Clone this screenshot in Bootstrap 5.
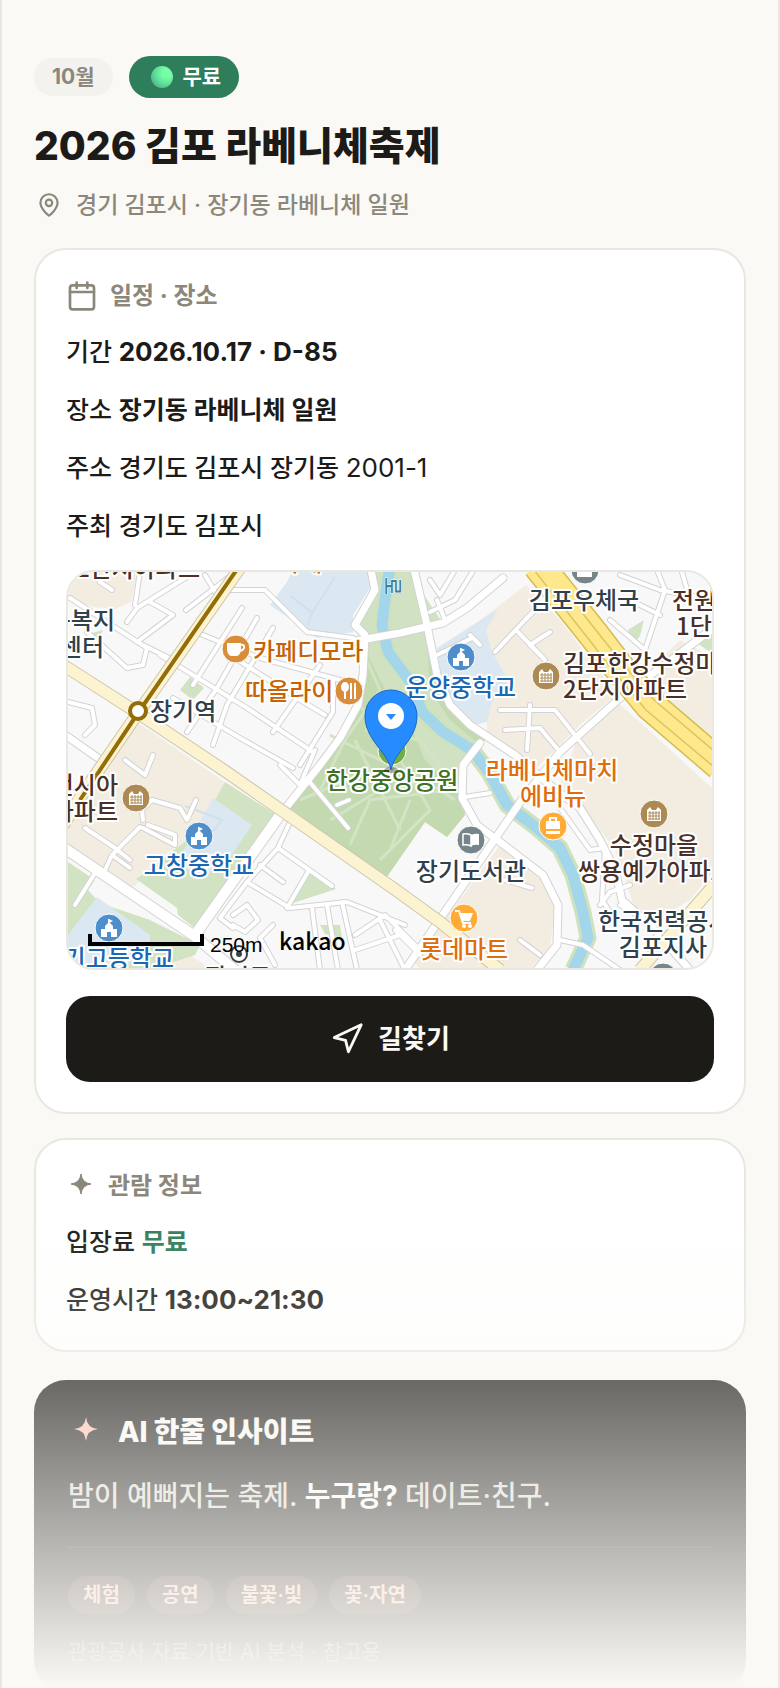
<!DOCTYPE html>
<html lang="ko">
<head>
<meta charset="utf-8">
<meta name="viewport" content="width=device-width, initial-scale=1">
<title>2026 김포 라베니체축제</title>
<link href="https://cdn.jsdelivr.net/npm/bootstrap@5.3.0/dist/css/bootstrap.min.css" rel="stylesheet">
<style>
:root{--ink:#1c1b17;--muted:#8c877b;--paper:#faf9f5;--rule:#e9e7e0;--green:#2e7d5b}
body{font-family:Inter,"Noto Sans CJK KR",sans-serif;color:var(--ink);background:var(--paper)}
.screen{background:var(--paper);border:solid var(--rule);border-width:0 2px;padding:56px 32px 0}
.fade-out{height:28vh;background:linear-gradient(rgba(250,249,245,0),#faf9f5);pointer-events:none}
.chip-month{background:#f3f2ee;color:var(--muted);font-size:21px;line-height:38px;padding:0 18px;font-weight:700}
.chip-free{background:var(--green);color:#fff;font-size:21px;line-height:42px;padding:0 18px 0 22px;font-weight:700;gap:10px}
.orb{width:22px;height:22px;border-radius:50%;background:radial-gradient(circle at 72% 32%,#76ffa6 0 18%,#5fe29a 50%,#52b792 78%,#5795a0)}
.page-title{font-size:39px;line-height:52px;font-weight:800;margin:22px 0 18px}
.place-line{font-size:23px;line-height:30px;color:var(--muted);font-weight:500;gap:12px;margin-bottom:28px}
.panel{background:#fff;border:2px solid var(--rule);border-radius:32px;padding:30px}
.panel-head{font-size:24px;line-height:32px;font-weight:700;color:var(--muted);gap:12px;margin:0 0 20px}
.facts{font-size:25px;line-height:40px;font-weight:500;gap:18px}
.facts strong{font-weight:700}
.facts .figures{font-size:26px}
.plain{font-weight:400}
.free{color:var(--green)}
.map-box{border:2px solid var(--rule);border-radius:28px;margin:24px 0 26px;aspect-ratio:648/400}
.map-box svg{width:100%;height:100%}
.route-btn{background:var(--ink);color:var(--paper);font-size:26px;line-height:34px;font-weight:700;padding:26px;border:0;border-radius:24px;gap:14px}
.route-btn:hover{background:#33312a;color:#fff}
.insight{background:var(--ink);color:#faf9f5;border-radius:32px;padding:34px 34px 24px;margin-top:28px}
.insight h2{font-size:28px;line-height:36px;font-weight:800;gap:14px;margin:0 0 24px}
.insight p{font-size:28px;line-height:44px;font-weight:500;color:#dedbd2;margin:0}
.insight p strong{color:#fff;font-weight:700}
.insight-tags{border-top:2px solid rgba(255,255,255,.08);margin-top:28px;padding-top:28px;gap:12px}
.tag{background:#42302a;color:#ffc9ba;font-size:20px;line-height:38px;padding:0 15px;font-weight:600}
.source{font-size:21px;line-height:32px;color:#8c877b;margin-top:22px}
.line-icon{fill:none;stroke:currentColor;stroke-width:2;stroke-linecap:round;stroke-linejoin:round}
.labels text{font:500 24px "Noto Sans CJK KR",sans-serif;stroke:#fff;stroke-width:4px;paint-order:stroke;stroke-linejoin:round}
.labels .river-name{font-size:20px;stroke-width:1px}
</style>
</head>
<body>
<main class="screen position-relative vh-100 overflow-hidden">
  <header>
    <div class="d-flex align-items-center gap-3">
      <span class="chip-month rounded-pill">10월</span>
      <span class="chip-free rounded-pill d-flex align-items-center"><span class="orb"></span>무료</span>
    </div>
    <h1 class="page-title">2026 김포 라베니체축제</h1>
    <div class="place-line d-flex align-items-center">
      <svg class="line-icon" width="30" height="30" viewBox="-2 -2 28 28"><path d="M20 10c0 6-8 12-8 12s-8-6-8-12a8 8 0 0 1 16 0Z"/><circle cx="12" cy="10" r="3"/></svg>
      <span>경기 김포시 · 장기동 라베니체 일원</span>
    </div>
  </header>

  <section class="panel">
    <h2 class="panel-head d-flex align-items-center">
      <svg class="line-icon" width="32" height="32" viewBox="0 0 24 24"><rect x="3" y="4" width="18" height="18" rx="2"/><path d="M8 2v4M16 2v4M3 9h18"/></svg>
      일정 · 장소
    </h2>
    <div class="facts d-flex flex-column">
      <div>기간 <strong class="figures">2026.10.17 · D-85</strong></div>
      <div>장소 <strong>장기동 라베니체 일원</strong></div>
      <div>주소 경기도 김포시 장기동 <span class="figures plain">2001-1</span></div>
      <div>주최 경기도 김포시</div>
    </div>
    <div class="map-box overflow-hidden">
      <svg class="d-block" viewBox="68 572 644 396" preserveAspectRatio="xMidYMid slice" role="img" aria-label="장기동 라베니체 지도">
        <defs>
          <g id="glyph-school" fill="#fff"><path d="M-8 9V1h4v-3l4-4 4 4v3h4v8h-6V4h-4v5z"/><path d="M-1-9h1l4 2-4 2v2h-1z"/></g>
          <g id="glyph-apt"><path d="M-7 7V-4l3-3 2 3h4l2-3 3 3V7z" fill="#fff"/><path d="M-4-3V6M-1-3V6M2-3V6M5-3V6M-6-1H6M-6 2H6M-6 5H6" stroke="#b08c55" stroke-width="1"/></g>
          <g id="alleys">
            <path d="M225 590L265 590 307 632 353 638M198 633L260 658 347 682M160 655L193 675 247 708 313 752M257 618L217 688 187 732M242 608L193 685M273 628L227 705 213 745M320 665L273 732M173 698L240 738 293 768M127 622L137 608 190 575M137 642L177 662M150 602L173 615 137 642M87 632L127 668 143 665 147 648 70 598M333 680L333 712 300 765M205 575L220 600M186 610L245 565M230 655L300 700 325 715M100 582L112 590M135 605L140 572"/>
            <path d="M278 848L332 886M278 848L247 882 220 918 233 928M247 882L290 908 347 902 405 925M312 908L320 970M327 905L338 970M342 902L357 970M260 865L283 882M308 872L287 908M273 925L260 938 275 965M233 915L247 905 258 920 245 932 233 925M355 935L385 915 420 950M355 950L400 935M380 920L405 970M280 765L300 785 315 750M290 822L278 848"/>
            <path d="M308 780L348 828M337 805L349 800M85 828L115 848 130 860M143 820L142 810 152 800 180 808 187 820 196 800M143 828L175 845 175 835 148 825M140 827L112 855 105 870M112 855L130 868M125 760L145 775 153 755M97 870L75 905M68 702L92 708 95 725 85 735"/>
            <path d="M560 752L540 728 505 730M590 754L555 710 500 710M550 632L530 645 545 660M495 652L525 620 533 612M518 632L545 660M470 635L480 645M530 705L527 750M437 655L472 638M437 600L445 620M430 580L440 595 455 570M480 560L455 600 430 612M465 797L490 793M560 808L590 850 604 848M605 850L602 900 610 912M560 940L583 945 620 970M600 905L610 892 630 885M520 940L540 955M505 880L532 888"/>
            <path d="M620 575L660 590 714 600M655 565L665 590 645 650 610 620M630 600L660 615M680 565L690 600M714 625L670 660M420 955L395 930M620 905L655 925"/>
          </g>
          <g id="streets">
            <path d="M280 815L320 765 340 738 358 705 363 675 365 635 355 625 375 590 370 565M355 641L400 633 443 623 467 608 503 578M413 565L427 625 437 675 450 705 470 725 515 755 550 785 580 808 600 840 615 870 622 900 650 925 690 970M714 628L620 698 560 752 523 798 405 970M480 743L463 765 462 798 477 825 500 842 543 875 558 905 557 945 537 970M65 735L98 758"/>
          </g>
          <path id="avenues" d="M60 845L193 935 235 970M280 815L197 932"/>
          <path id="boulevards" d="M60 663L138 713 225 771 393 888 440 922 500 970M242 565L138 713 85 790 60 830M640 970L714 885"/>
          <path id="highway" d="M538 565L594 635 617 665 650 705 720 765"/>
          <path id="river" d="M390 565L385 600 382 625 388 652 412 684 422 712 443 732 472 750 489 772 507 805 537 828 560 848 573 875 583 912 588 938 573 970"/>
        </defs>
        <rect x="60" y="560" width="660" height="420" fill="#f8f8f8"/>
        <g fill="#f3ece1">
          <path d="M60 560H140L131 602 115 609 93 607 68 598H60z"/>
          <path d="M137 722L225 782 197 832 132 888 60 843V830L90 775z"/>
          <path d="M470 628L526 585 560 620 617 694 580 725 530 775 487 735 487 700 500 672z"/>
          <path d="M680 640L714 658V738L640 680z"/>
          <path d="M617 702L640 722 714 790V870L690 900 660 918 636 912 615 850 585 810 560 785 575 745z"/>
          <path d="M500 845L540 872 555 905 550 948 530 970H420L410 955 445 920z"/>
          <path d="M150 970L190 955 205 965V970z"/>
        </g>
        <g fill="#d1e3c3">
          <path d="M225 782L277 815 197 930 178 915 177 908 136 879 197 832z"/>
          <path d="M68 862L95 880 88 890 100 903 150 920 200 945 195 955 150 970H60V860z"/>
          <path d="M92 633L103 630 98 640z"/><path d="M190 677L204 688 193 700 180 690z"/>
          <path d="M310 872L336 889 290 904z"/><path d="M320 925L340 925 342 938 325 934z"/>
          <path d="M628 630L644 620 640 636 634 643z"/><path d="M693 640L714 630V655z"/><path d="M424 595L442 622 430 625z"/>
        </g>
        <g fill="#dbe7f1">
          <path d="M287 582L295 565H370L372 585 353 615V632L317 638 270 605z"/>
          <path d="M213 798L252 825 227 862 200 878 177 862z"/>
          <path d="M97 897L150 935 150 950 120 968H60L68 935z"/>
          <path d="M437 648L498 609 486 630 492 652 508 680 492 702 487 722 463 728 443 692z"/>
        </g>
        <path d="M155 862L197 832 136 879z" fill="#f8f8f8"/>
        <path d="M376 565H415L427 625 435 665 443 692 460 718 487 738 463 765 460 795 465 815 447 837 425 822 386 878 330 838 290 808 308 780 327 752 357 705 363 675 363 638 353 628 355 618 375 585z" fill="#d0e2c2"/>
        <path d="M363 645L385 690 400 700 425 760 463 800 465 815 447 837 425 822 386 878 290 808 308 780 327 752 357 705 363 675z" fill="#c3dab0"/>
        <path d="M427 640L443 692 460 718 487 738 480 745 450 720 430 690z" fill="#c3dab0"/>
        <path d="M362 650L380 690 345 740 320 790M330 735L440 790 455 800M355 740L370 770 300 800M400 760L430 810 380 860M350 845L370 800 450 790M330 820L380 790 400 830M365 730L420 740 460 790M390 850L410 800M345 700L385 720" fill="none" stroke="#d2e4c4" stroke-width="3"/>
        <g fill="none" stroke-linejoin="round">
          <use href="#river" stroke="#cfe2bd" stroke-width="17"/>
          <use href="#river" stroke="#a3d6ea" stroke-width="11"/>
        </g>
        <path d="M291 596L312 613 335 577M312 613L308 625M185 806L222 820 210 835" fill="none" stroke="#cfe0ee" stroke-width="2"/>

        <g fill="none" stroke-linejoin="round">
          <g stroke="#d3d3d3" stroke-linecap="round">
            <use href="#alleys" stroke-width="6"/><use href="#streets" stroke-width="9"/><use href="#avenues" stroke-width="12"/>
          </g>
          <g stroke="#fff" stroke-linecap="round">
            <use href="#alleys" stroke-width="4"/><use href="#streets" stroke-width="7"/><use href="#avenues" stroke-width="10"/>
          </g>
          <use href="#boulevards" stroke="#cdc5ac" stroke-width="13"/>
          <use href="#boulevards" stroke="#fcf4d0" stroke-width="11"/>
          <use href="#highway" stroke="#d3be52" stroke-width="32"/>
          <use href="#highway" stroke="#ffe78b" stroke-width="29"/>
          <path stroke="#d9c660" stroke-width="1.5" d="M530 565L587 637 611 668 646 710 720 772M580 610L622 663 654 700 720 756"/>
          <path stroke="#946d08" stroke-width="4" d="M240 565L138 713 80 800"/>
        </g>
        <circle cx="138" cy="711" r="8" fill="#fff" stroke="#946d08" stroke-width="4"/>

        <g stroke="#fff" stroke-width="1">
          <g fill="#4e8fcb"><circle cx="461" cy="657" r="14"/><circle cx="199" cy="836" r="14"/><circle cx="109" cy="928" r="14"/></g>
          <g fill="#ad8a54"><circle cx="546" cy="676" r="14"/><circle cx="136" cy="798" r="14"/><circle cx="654" cy="814" r="14"/></g>
          <g fill="#75858a"><circle cx="585" cy="570" r="14"/><circle cx="471" cy="840" r="14"/><circle cx="663" cy="977" r="14"/></g>
          <g fill="#d98c39"><circle cx="236" cy="649" r="14"/><circle cx="349" cy="691" r="14"/></g>
          <g fill="#ffab35"><circle cx="553" cy="826" r="14"/><circle cx="464" cy="918" r="14"/></g>
          <circle cx="392" cy="751" r="14" fill="#70ad47"/>
        </g>
        <use href="#glyph-school" x="461" y="657"/><use href="#glyph-school" x="199" y="836"/><use href="#glyph-school" x="109" y="928"/>
        <use href="#glyph-apt" x="546" y="676"/><use href="#glyph-apt" x="136" y="798"/><use href="#glyph-apt" x="654" y="814"/>
        <path d="M577 577v-5l5-3h5l5 3v5z" fill="#fff"/>
        <path d="M227 643h14v7q-1 6-5 6h-4q-4 0-5-6z" fill="#fff"/><path d="M240 645q5-1 4 3-1 3-5 3" fill="none" stroke="#fff" stroke-width="2"/>
        <ellipse cx="345" cy="687" rx="4" ry="5" fill="#fff"/><path d="M345 690v9M351 683v16M355 683v16" stroke="#fff" stroke-width="2"/>
        <path d="M471 835q-4-2-8-1v11q4-1 8 1z" fill="none" stroke="#fff" stroke-width="1.5"/><path d="M471 835q4-2 8-1v11q-4-1-8 1z" fill="#fff"/>
        <path d="M546 821h14v8h-14zM546 831h14v3h-14z" fill="#fff"/><path d="M550 821v-3h6v3" fill="none" stroke="#fff" stroke-width="2"/>
        <path d="M455 911h4l4 12h8" fill="none" stroke="#fff" stroke-width="2"/><path d="M460 913h13l-3 8h-8z" fill="#fff"/><circle cx="464" cy="926" r="2" fill="#fff"/><circle cx="470" cy="926" r="2" fill="#fff"/>

        <g class="labels">
          <g fill="#4a3026">
            <text x="138" y="577" text-anchor="middle">2단지아파트</text>
            <text x="672" y="609">전원</text><text x="676" y="635">1단</text>
            <text x="563" y="672">김포한강수정마</text><text x="563" y="698">2단지아파트</text>
            <text x="118" y="794" text-anchor="end">런시아</text><text x="118" y="820" text-anchor="end">아파트</text>
            <text x="654" y="854" text-anchor="middle">수정마을</text><text x="578" y="880">쌍용예가아파트</text>
          </g>
          <g fill="#2f414c">
            <text x="115" y="629" text-anchor="end">운복지</text><text x="104" y="656" text-anchor="end">센터</text>
            <text x="150" y="720">장기역</text>
            <text x="584" y="609" text-anchor="middle">김포우체국</text>
            <text x="471" y="880" text-anchor="middle">장기도서관</text>
            <text x="598" y="930">한국전력공사</text><text x="663" y="956" text-anchor="middle">김포지사</text>
            <text x="238" y="986" text-anchor="middle">장기동</text>
          </g>
          <g fill="#c56305">
            <text x="300" y="571" text-anchor="middle">카페</text>
            <text x="253" y="660">카페디모라</text><text x="245" y="700">따올라이</text>
          </g>
          <g fill="#df6d0c">
            <text x="552" y="779" text-anchor="middle">라베니체마치</text><text x="553" y="805" text-anchor="middle">에비뉴</text>
            <text x="464" y="958" text-anchor="middle">롯데마트</text>
          </g>
          <g fill="#1a67b3">
            <text x="461" y="696" text-anchor="middle">운양중학교</text><text x="199" y="874" text-anchor="middle">고창중학교</text>
            <text x="174" y="967" text-anchor="end">장기고등학교</text>
          </g>
          <text x="392" y="789" text-anchor="middle" fill="#3f6f20">한강중앙공원</text>
          <text class="river-name" transform="translate(385 577) rotate(90)" fill="#3f7f9c">로</text>
        </g>
        <circle cx="239" cy="954" r="8" fill="#fff" stroke="#3a3f44" stroke-width="2"/><circle cx="239" cy="954" r="3" fill="#3a3f44"/>
        <ellipse cx="391" cy="770" rx="7" ry="3" fill="#000" opacity=".3"/>
        <path d="M391 770C388 752 365 740 365 716a26 26 0 0 1 52 0C417 740 394 752 391 770z" fill="#258bff" stroke="#1967c4"/>
        <circle cx="391" cy="716" r="13" fill="#fff"/><path d="M386 714h10l-5 6z" fill="#258bff"/>
        <path d="M90 934V944H202V934" fill="none" stroke="#000" stroke-width="4"/>
        <text x="210" y="952" font-family="Liberation Sans, sans-serif" font-size="21">250m</text>
        <text x="279" y="950" font-family="Noto Sans CJK KR, sans-serif" font-weight="500" font-size="23">kakao</text>
      </svg>
    </div>
    <button type="button" class="route-btn btn w-100 d-flex align-items-center justify-content-center">
      <svg class="line-icon" width="34" height="34" viewBox="0 0 24 24"><path d="M3 11L22 2 13 21 11 13z"/></svg>
      길찾기
    </button>
  </section>

  <section class="panel mt-4">
    <h2 class="panel-head d-flex align-items-center">
      <svg width="30" height="30" viewBox="0 0 30 30" fill="currentColor"><path d="M15 3Q16 12 25 13 16 14 15 23 14 14 5 13 14 12 15 3z" stroke="currentColor" stroke-width="1" stroke-linejoin="round"/></svg>
      관람 정보
    </h2>
    <div class="facts d-flex flex-column">
      <div>입장료 <strong class="free">무료</strong></div>
      <div>운영시간 <strong class="figures">13:00~21:30</strong></div>
    </div>
  </section>

  <section class="insight">
    <h2 class="d-flex align-items-center">
      <svg width="36" height="36" viewBox="0 0 36 36" fill="#ffc0ad"><path d="M18 3Q19 14 30 15 19 16 18 27 17 16 6 15 17 14 18 3z"/></svg>
      AI 한줄 인사이트
    </h2>
    <p>밤이 예뻐지는 축제. <strong>누구랑?</strong> 데이트·친구.</p>
    <div class="insight-tags d-flex flex-wrap">
      <span class="tag rounded-pill">체험</span><span class="tag rounded-pill">공연</span><span class="tag rounded-pill">불꽃·빛</span><span class="tag rounded-pill">꽃·자연</span>
    </div>
    <div class="source">관광공사 자료 기반 AI 분석 · 참고용</div>
  </section>
  <div class="fade-out position-absolute bottom-0 start-0 end-0"></div>
</main>
<script src="https://cdn.jsdelivr.net/npm/bootstrap@5.3.0/dist/js/bootstrap.bundle.min.js"></script>
</body>
</html>
